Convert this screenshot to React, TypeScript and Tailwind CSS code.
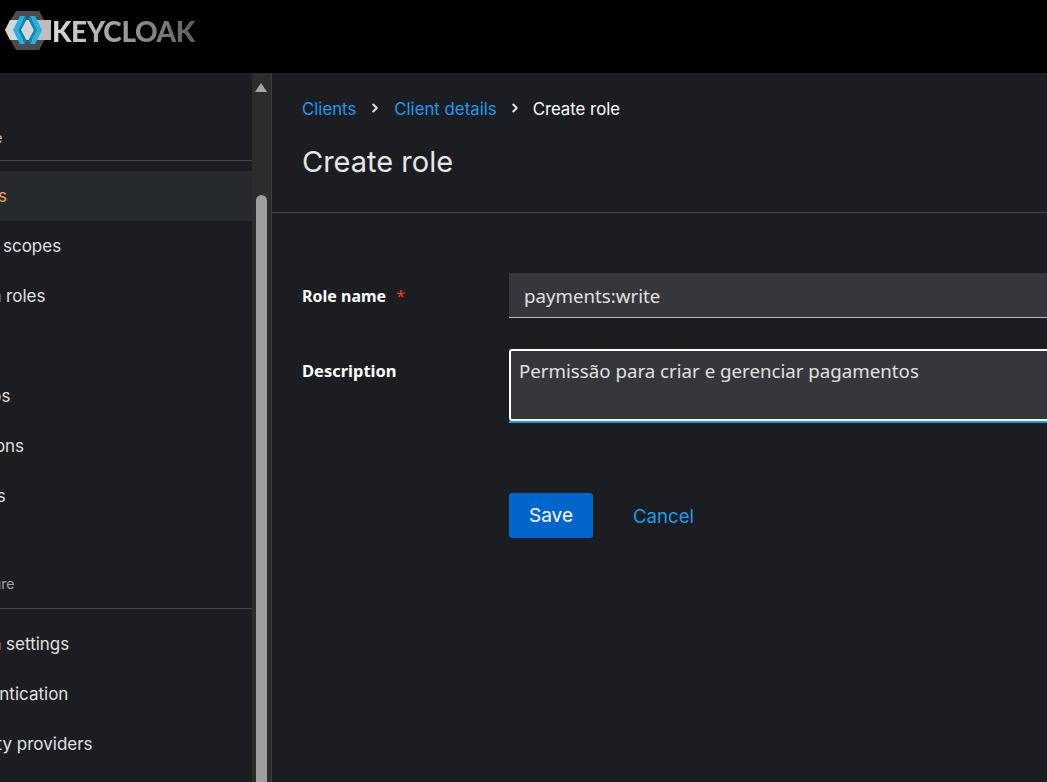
import { ChevronRight } from 'lucide-react';

const manageItems = ['Clients', 'Client scopes', 'Realm roles', 'Users', 'Groups', 'Sessions', 'Events'];
const configureItems = ['Realm settings', 'Authentication', 'Identity providers', 'User federation'];

const Logo = () => {
  return (
    <div className="flex items-center pl-[5px]">
      <svg width="47" height="40" viewBox="0 0 47 40" className="shrink-0">
        <polygon points="11,0 34,0 45,19 34,39 11,39 0,19" fill="#4c4c4c" />
        <polygon points="5,9 46,9 46,29 5,29 0,19" fill="#d6d6d6" />
        <polygon points="24,9 46,9 46,29 32,29" fill="#bdbdbd" />
        <polygon points="15,5 20,5 13,19 20,33 15,33 8,19" fill="#1fb4e4" />
        <polygon points="20,5 22,8 16,19 22,30 20,33 13,19" fill="#0d87ae" />
        <polygon points="30,5 25,5 32,19 25,33 30,33 37,19" fill="#1fb4e4" />
        <polygon points="25,5 23,8 29,19 23,30 25,33 32,19" fill="#0d87ae" />
      </svg>
      <span className="font-['Lato',sans-serif] text-[28px] font-black leading-none tracking-[-0.45px] bg-gradient-to-r from-[#dcdcdc] to-[#5e5e5e] bg-clip-text text-transparent">
        KEYCLOAK
      </span>
    </div>
  );
};

const Sidebar = () => {
  return (
    <aside className="flex w-[272px] shrink-0 border-r border-[#3c3f42]">
      <div className="min-w-0 flex-1 overflow-hidden">
        <div className="ml-[-51px] mt-[55px] pb-[12px] text-sm text-[#c7c7c7]">Manage</div>
        <div className="h-px bg-[#44464a]" />
        <nav className="mt-[10px]">
          {manageItems.map((item, i) => (
            <div
              key={item}
              className={`flex h-[50px] items-center whitespace-nowrap pt-[2px] text-[17px] text-[#e0e0e0] ${i === 0 ? 'bg-[#26292d]' : ''}`}
            >
              <span className={`ml-[-48px] ${i === 0 ? 'text-[#e8a15a]' : ''}`}>{item}</span>
            </div>
          ))}
        </nav>
        <div className="ml-[-51px] mt-[53px] pb-[14px] text-sm text-[#a3a3a3]">Configure</div>
        <div className="h-px bg-[#44464a]" />
        <nav className="mt-[10px]">
          {configureItems.map((item) => (
            <div key={item} className="flex h-[50px] items-center whitespace-nowrap pt-[2px] text-[17px] text-[#e0e0e0]">
              <span className="ml-[-48px]">{item}</span>
            </div>
          ))}
        </nav>
      </div>
      <div className="flex w-[19px] shrink-0 flex-col items-center bg-[#2c2c2c] pr-[1px]">
        <div className="mt-[10px] h-0 w-0 border-x-[6px] border-b-[9px] border-x-transparent border-b-[#a6a6a6]" />
        <div className="mt-[103px] w-[11px] flex-1 rounded-t-full bg-[#9e9e9e]" />
      </div>
    </aside>
  );
};

const App = () => {
  return (
    <div className="flex h-[782px] w-[1047px] flex-col overflow-hidden bg-[#1b1d21] font-['Inter',sans-serif]">
      <header className="flex h-[73px] shrink-0 items-center bg-black pb-[12px]">
        <Logo />
      </header>
      <div className="flex min-h-0 flex-1">
        <Sidebar />
        <main className="min-w-0 flex-1 overflow-hidden">
          <section className="h-[140px] border-b border-[#44464a] pl-[30px]">
            <div className="flex items-center pt-[25px] text-[16.8px] leading-[22px]">
              <a className="text-[#1f9bef]">Clients</a>
              <ChevronRight size={14} strokeWidth={3.5} className="mx-[12px] mb-[3px] text-[#e0e0e0]" />
              <a className="text-[#1f9bef]">Client details</a>
              <ChevronRight size={14} strokeWidth={3.5} className="mx-[11px] mb-[3px] text-[#e0e0e0]" />
              <span className="text-white">Create role</span>
            </div>
            <h1 className="mt-[24px] text-[29px] leading-[36px] text-[#e6e6e6]">Create role</h1>
          </section>
          <form className="pl-[30px] pt-[60px]">
            <div className="flex">
              <label className="w-[207px] shrink-0 pt-[11px] font-['Noto_Sans',sans-serif] text-base font-bold leading-[24px] text-white">
                Role name <span className="ml-[6px] font-normal text-[#f0392b]">*</span>
              </label>
              <input
                readOnly
                value="payments:write"
                className="h-[45px] w-[700px] shrink-0 border-b border-[#b8bbbe] bg-[#36373b] px-[15px] font-['Noto_Sans',sans-serif] text-[18.7px] text-[#e0e0e0] outline-none"
              />
            </div>
            <div className="mt-[31px] flex">
              <label className="w-[207px] shrink-0 pt-[10px] font-['Noto_Sans',sans-serif] text-[16.5px] font-bold leading-[24px] text-white">
                Description
              </label>
              <div className="w-[700px] shrink-0 border-b-2 border-[#1f9bef]">
                <textarea
                  readOnly
                  value="Permissão para criar e gerenciar pagamentos"
                  className="block h-[72px] w-full resize-none rounded-[3px] border-2 border-white bg-[#36373b] px-[8px] py-[8px] font-['Noto_Sans',sans-serif] text-[18.7px] leading-[24px] text-[#e0e0e0] outline-none"
                />
              </div>
            </div>
            <div className="mt-[70px] flex items-center">
              <button type="button" className="ml-[207px] h-[45px] w-[84px] rounded-[3px] bg-[#0066cc] pt-[2px] text-[19px] text-white">
                Save
              </button>
              <button type="button" className="ml-[40px] h-[45px] pt-[2px] text-[18.6px] text-[#1f9bef]">
                Cancel
              </button>
            </div>
          </form>
        </main>
      </div>
    </div>
  );
};

export default App;
